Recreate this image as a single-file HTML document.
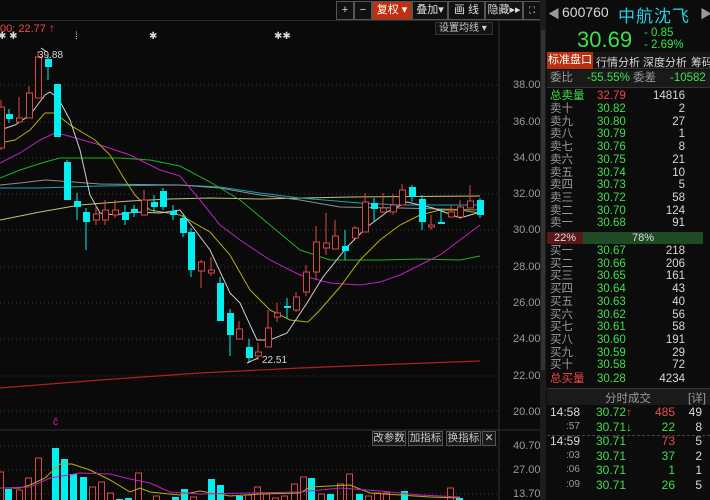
<!DOCTYPE html>
<html><head><meta charset="utf-8"><style>
*{margin:0;padding:0;box-sizing:border-box}
body{width:710px;height:500px;background:#0a0a0a;overflow:hidden;position:relative;font-family:"Liberation Sans","Noto Sans CJK SC",sans-serif;font-size:11px;color:#c8c8c8}
.a{position:absolute;white-space:nowrap}
.g{color:#3ce04a}.r{color:#f04848}.w{color:#d8d8d8}.gr{color:#9a9a9a}
.btn{position:absolute;top:1px;height:19px;border:1px solid #555;background:#111;color:#ddd;font-size:11px;line-height:17px;text-align:center}
.row{position:absolute;left:550px;width:155px;height:13px;font-size:11.5px;line-height:13px}
.row span{position:absolute}
.vb{position:absolute;top:431px;height:15px;border:1px solid #555;background:#1a1a1a;color:#ccc;font-size:10.5px;line-height:13px;text-align:center}
</style></head><body>
<svg id="ch" class="a" style="left:0;top:0" width="545" height="500" xmlns="http://www.w3.org/2000/svg"></svg>

<div class="a" style="left:0;top:20px;width:545px;height:1px;background:#2a2a2a"></div>
<div class="a r" style="left:0;top:21px;font-size:11px">00: 22.77 <span style="font-size:12px">↑</span></div>
<div class="a w" style="left:-2px;top:31px;font-size:10px;letter-spacing:0">✱ ✱</div>
<div class="a w" style="left:75px;top:31px;font-size:10px">⁞</div>
<div class="a w" style="left:149px;top:31px;font-size:10px">✱</div>
<div class="a w" style="left:274px;top:31px;font-size:10px">✱✱</div>
<div class="a w" style="left:38px;top:50px;font-size:10px">39.88</div>
<div class="a w" style="left:262px;top:355px;font-size:10px">22.51</div>

<div class="btn" style="left:336px;width:18px">+</div>
<div class="btn" style="left:354px;width:18px">−</div>
<div class="btn" style="left:372px;width:40px;background:#c03010;color:#fff">复权 ▾</div>
<div class="btn" style="left:412px;width:36px">叠加▾</div>
<div class="btn" style="left:448px;width:37px">画 线</div>
<div class="btn" style="left:485px;width:38px">隐藏▸▸</div>
<div class="btn" style="left:523px;width:18px;font-size:9px">⛶</div>
<div class="a" style="left:435px;top:22px;width:58px;height:13px;border:1px solid #333;background:#141414;color:#ccc;font-size:10px;line-height:11px;padding-left:3px">设置均线 ▾</div>

<div class="a gr" style="left:513px;top:79px">38.00</div>
<div class="a gr" style="left:513px;top:116px">36.00</div>
<div class="a gr" style="left:513px;top:152px">34.00</div>
<div class="a gr" style="left:513px;top:188px">32.00</div>
<div class="a gr" style="left:513px;top:224px">30.00</div>
<div class="a gr" style="left:513px;top:261px">28.00</div>
<div class="a gr" style="left:513px;top:297px">26.00</div>
<div class="a gr" style="left:513px;top:333px">24.00</div>
<div class="a gr" style="left:513px;top:370px">22.00</div>
<div class="a gr" style="left:513px;top:406px">20.00</div>
<div class="a gr" style="left:513px;top:440px">40.70</div>
<div class="a gr" style="left:513px;top:464px">27.00</div>
<div class="a gr" style="left:513px;top:488px">13.70</div>
<div class="a" style="left:53px;top:417px;color:#e020a0;font-size:10px">č</div>
<div class="vb" style="left:372px;width:34px">改参数</div>
<div class="vb" style="left:408px;width:35px">加指标</div>
<div class="vb" style="left:446px;width:35px">换指标</div>
<div class="vb" style="left:482px;width:14px">✕</div>

<!-- scrollbar -->
<div class="a" style="left:540px;top:0;width:6px;height:500px;background:#1c1c1c"></div>
<div class="a" style="left:541px;top:30px;width:4px;height:340px;background:#333"></div>

<!-- right panel -->
<div class="a" style="left:546px;top:0;width:164px;height:500px;background:#0c0c0c"></div>
<div class="a gr" style="left:548px;top:5px;font-size:12px">◀</div>
<div class="a w" style="left:562px;top:4px;font-size:14px">600760</div>
<div class="a" style="left:618px;top:2px;font-size:17px;color:#20d0e0;letter-spacing:1px">中航沈飞</div>
<div class="a gr" style="left:700px;top:5px;font-size:12px">▶</div>
<div class="a g" style="left:577px;top:27px;font-size:22px">30.69</div>
<div class="a g" style="left:644px;top:27px;font-size:11.5px">- 0.85</div>
<div class="a g" style="left:644px;top:39px;font-size:11.5px">- 2.69%</div>
<div class="a" style="left:547px;top:52px;width:163px;height:17px;background:#151515;border-bottom:1px solid #333"></div>
<div class="a" style="left:547px;top:52px;width:46px;height:17px;background:#b83010;color:#fff;font-size:11px;line-height:17px;text-align:center">标准盘口</div>
<div class="a w" style="left:596px;top:54px;font-size:11px">行情分析</div>
<div class="a w" style="left:643px;top:54px;font-size:11px">深度分析</div>
<div class="a w" style="left:691px;top:54px;font-size:11px">筹码</div>
<div class="a" style="left:547px;top:70px;width:163px;height:17px;background:#1a1a1a"></div>
<div class="row" style="top:72px"><span class="gr">委比</span><span class="g" style="left:37px">-55.55%</span><span class="gr" style="left:83px">委差</span><span class="g" style="left:120px">-10582</span></div>
<div class="a" style="left:547px;top:87px;width:163px;height:1px;background:#333"></div>
<div id="book"></div>
<div class="a" style="left:547px;top:232px;width:36px;height:12px;background:#5a1818;color:#ddd;text-align:center;font-size:11px;line-height:12px">22%</div>
<div class="a" style="left:583px;top:232px;width:120px;height:12px;background:#1e4a24;color:#ddd;text-align:center;font-size:11px;line-height:12px">78%</div>
<div class="a" style="left:547px;top:388px;width:163px;height:17px;background:#1a1a1a;border-top:1px solid #333"></div>
<div class="a gr" style="left:605px;top:390px;font-size:11.5px">分时成交</div>
<div class="a gr" style="left:688px;top:390px;font-size:11.5px">[详]</div>

<script>
var s=document.getElementById('ch'),h='';
function L(a,c,w,d){h+='<polyline fill="none" stroke="'+c+'" stroke-width="'+(w||1)+'"'+(d?' stroke-dasharray="'+d+'"':'')+' points="'+a.join(' ')+'"/>';}
[85,122,158,194,230,267,303,339,376,411,446,470,494].forEach(function(y){L([0+','+y,500+','+y],'#3a3a3a',1,'1,3')});
h+='<line x1="499" y1="21" x2="499" y2="500" stroke="#333"/><line x1="0" y1="430" x2="540" y2="430" stroke="#333"/>';
// MAs
L(['0,388','100,380','200,373','300,368','400,364','480,361'],'#b02020',1.2);
L(['0,220','40,212','80,205','130,201','170,199','210,198','260,199','350,197','480,196'],'#c8c070');
L(['0,188','40,188','100,186','180,185','220,187','260,193','300,198','360,203','400,205','480,205'],'#10a8b8');
L(['0,185','20,183','45,180','60,181','100,184','180,185','220,188','260,195','300,200','340,207','400,208','480,210'],'#909090');
L(['0,178','20,170','45,162','60,158','120,158','150,160','180,166','210,182','240,200','270,225','300,250','330,260','380,260','420,259','460,260','480,256'],'#20b020');
L(['0,163','20,153','40,140','55,133','65,135','100,145','130,155','160,170','180,176','200,200','220,225','240,240','270,260','300,275','330,283','360,285','380,282','400,275','420,265','440,255','460,240','480,225'],'#c020c0');
L(['0,143','15,140','30,130','45,113','55,113','70,125','95,140','110,155','125,180','135,195','150,210','180,215','210,232','230,255','250,290','270,310','290,320','308,322','320,310','340,287','360,260','380,240','400,225','420,215','440,210','460,210','480,213'],'#b8b010');
L(['0,130','15,125','30,115','45,95','50,92','58,98','70,120','80,150','90,195','100,213','115,215','135,212','160,213','180,210','210,250','230,293','240,303','257,340','270,340','287,333','307,303','323,277','347,247','367,227','387,212','407,202','433,208','447,213','460,218','477,213'],'#d0d0d0');
// candles [x0,top,bot,wt,wb,c]
var C=[[-2,107,148,100,150,'r'],[6,114,119,109,123,'c'],[16,118,122,97,123,'r'],[26,93,118,86,118,'r'],[35,57,98,51,98,'r'],[45,59,67,56,80,'c'],[54,84,137,84,137,'c'],[64,162,200,160,200,'c'],[74,201,207,193,220,'c'],[83,212,222,208,250,'c'],[93,214,220,205,225,'r'],[102,210,220,200,225,'r'],[112,210,215,200,218,'r'],[122,212,220,205,225,'c'],[131,209,213,205,217,'c'],[141,200,215,190,215,'r'],[151,202,207,195,212,'c'],[160,191,207,188,210,'c'],[170,211,215,205,220,'c'],[180,218,233,215,237,'c'],[188,232,270,228,277,'c'],[198,262,271,260,288,'r'],[208,270,273,257,276,'r'],[217,283,321,277,321,'c'],[227,313,335,309,356,'c'],[236,329,339,321,339,'r'],[246,347,358,339,363,'c'],[255,352,356,343,360,'r'],[265,328,347,310,347,'r'],[274,313,317,303,322,'r'],[284,306,308,298,318,'c'],[293,297,310,292,312,'r'],[303,272,292,265,296,'r'],[313,242,272,226,280,'r'],[323,243,248,213,255,'r'],[332,236,249,220,249,'r'],[342,246,251,230,260,'c'],[352,228,238,226,238,'r'],[362,202,232,193,232,'r'],[371,203,209,198,222,'c'],[380,208,212,193,213,'r'],[390,205,212,194,215,'r'],[399,190,205,184,205,'r'],[409,187,197,185,202,'c'],[419,199,222,195,230,'c'],[428,225,227,215,230,'r'],[438,222,224,209,224,'c'],[448,212,217,205,217,'r'],[457,207,217,200,217,'r'],[467,201,208,185,208,'r'],[477,200,215,198,218,'c']];
C.forEach(function(c){var x=c[0]+3,col=c[5]=='r'?'#d84848':'#00f0f0';
h+='<line x1="'+x+'" y1="'+c[3]+'" x2="'+x+'" y2="'+c[4]+'" stroke="'+col+'"/>';
h+=c[5]=='r'?'<rect x="'+(c[0]+.5)+'" y="'+c[1]+'" width="6" height="'+Math.max(1,c[2]-c[1])+'" fill="#0a0a0a" stroke="'+col+'"/>':'<rect x="'+c[0]+'" y="'+c[1]+'" width="7" height="'+Math.max(1,c[2]-c[1])+'" fill="'+col+'"/>';});
h+='<path d="M41,48 L47,52 M247,363 L258,358" stroke="#ddd"/>';
// volume
var V=[[-3,472,'r'],[5,489,'c'],[16,490,'r'],[25,478,'r'],[35,458,'r'],[52,448,'c'],[61,459,'c'],[70,474,'c'],[80,477,'c'],[89,487,'r'],[98,482,'r'],[107,493,'r'],[116,499,'c'],[125,498,'c'],[135,473,'r'],[153,496,'r'],[172,497,'c'],[181,489,'c'],[190,497,'r'],[208,479,'c'],[217,485,'c'],[236,496,'c'],[245,495,'r'],[254,487,'r'],[263,494,'r'],[272,498,'r'],[281,496,'r'],[291,484,'r'],[300,477,'r'],[308,478,'c'],[318,494,'r'],[327,494,'c'],[337,484,'r'],[346,474,'r'],[356,494,'c'],[365,496,'r'],[374,493,'r'],[383,493,'r'],[401,491,'c'],[447,488,'r'],[456,498,'c']];
V.forEach(function(v){h+=v[2]=='r'?'<rect x="'+(v[0]+.5)+'" y="'+v[1]+'" width="6" height="'+(502-v[1])+'" fill="none" stroke="#d84848"/>':'<rect x="'+v[0]+'" y="'+v[1]+'" width="7" height="'+(502-v[1])+'" fill="#00f0f0"/>';});
L(['0,488','20,488','30,485','45,478','60,464','72,464','90,470','110,480','130,492','140,488','150,492','180,495','200,491','230,496','260,494','300,493','310,487','350,485','370,493','400,495','430,497','460,498'],'#b8b010');
L(['0,488','30,487','50,478','80,473','110,474','130,479','150,483','170,492','200,494','250,493','300,492','340,488','380,491','420,495','460,497'],'#c020c0');
s.innerHTML=h;
// order book
var b='',cn=['十','九','八','七','六','五','四','三','二','一'];
function R(y,lab,lc,p,pc,q,qc,extra){b+='<div class="row" style="top:'+y+'px"><span class="'+lc+'">'+lab+'</span><span class="'+pc+'" style="left:47px">'+p+'</span><span class="'+qc+'" style="right:20px;left:auto;text-align:right">'+q+'</span>'+(extra||'')+'</div>';}
R(90,'总卖量','g','32.79','r','14816','w');
var sp=['30.82','30.80','30.79','30.76','30.75','30.74','30.73','30.72','30.70','30.68'],sq=[2,27,1,8,21,10,5,58,124,91];
for(var i=0;i<10;i++)R(103+i*12.7,'卖'+cn[i],'gr',sp[i],'g',sq[i],'w');
var bp=['30.67','30.66','30.65','30.64','30.63','30.62','30.61','30.60','30.59','30.58'],bq=[218,206,161,43,40,56,58,191,29,72],bc=['一','二','三','四','五','六','七','八','九','十'];
for(i=0;i<10;i++)R(245+i*12.7,'买'+bc[i],'gr',bp[i],'g',bq[i],'w');
R(373,'总买量','r','30.28','g','4234','w');
var T=[['14:58','30.72','↑','485','r','49','r'],[':57','30.71','↓','22','g','8','g'],['14:59','30.71','','73','r','5',''],[':03','30.71','','37','g','2',''],[':06','30.71','','1','g','1',''],[':09','30.71','','26','g','5','']];
T.forEach(function(t,j){var y=405+j*14.6,tl=t[0].length>3;b+='<div class="row" style="top:'+y+'px;font-size:12px;height:14px;line-height:14px"><span class="'+(tl?'w':'gr')+'" style="left:'+(tl?0:16)+'px;'+(tl?'':'font-size:10px')+'">'+t[0]+'</span><span class="g" style="left:46px">'+t[1]+'<b class="'+t[6]+'" style="font-weight:normal">'+t[2]+'</b></span><span class="'+t[4]+'" style="right:30px;text-align:right">'+t[3]+'</span><span class="w" style="right:3px;text-align:right">'+t[5]+'</span></div>';if(j==1)b+='<div class="a" style="left:547px;top:'+(y+15)+'px;width:163px;border-top:1px dashed #444"></div>';});
document.getElementById('book').innerHTML=b;
</script>
</body></html>
